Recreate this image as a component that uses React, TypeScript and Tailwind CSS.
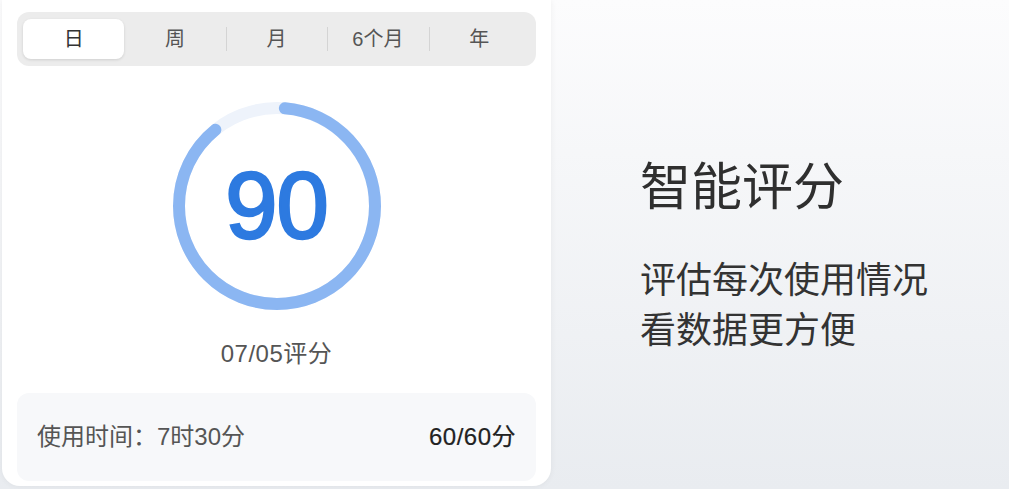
const tabs = ["日", "周", "月", "6个月", "年"];

function ScoreRing({ score }: { score: number }) {
  const r = 98;
  const c = 2 * Math.PI * r;
  const len = c * (score / 100) - 14;
  return (
    <div className="relative w-[220px] h-[220px]">
      <svg width="220" height="220" viewBox="0 0 220 220" className="absolute inset-0 -rotate-90">
        <circle cx="110" cy="110" r={r} fill="none" stroke="#eef3fb" strokeWidth="12" />
        <circle
          cx="110"
          cy="110"
          r={r}
          fill="none"
          stroke="#8bb6f2"
          strokeWidth="12"
          strokeLinecap="round"
          strokeDasharray={`${len} ${c}`}
          strokeDashoffset={-8}
        />
      </svg>
      <div className="absolute inset-0 flex items-center justify-center">
        <span className="text-[94px] leading-none text-[#2d7ae0] tracking-[-1px] [-webkit-text-stroke:2.5px_#2d7ae0]">
          {score}
        </span>
      </div>
    </div>
  );
}

export default function App() {
  return (
    <div
      className="w-[1009px] h-[489px] flex bg-gradient-to-b from-[#fcfcfd] to-[#e9ecf0] overflow-hidden"
      style={{ fontFamily: '"Liberation Sans", "Noto Sans CJK SC", sans-serif' }}
    >
      {/* score card */}
      <div className="ml-[2px] w-[549px] h-[486px] bg-white rounded-b-[18px] shadow-[0_0_6px_rgba(0,0,0,0.06)] flex flex-col px-[15px] pt-[12px]">
        <div className="h-[54px] rounded-[12px] bg-[#ececec] flex items-center px-[6px]">
          {tabs.map((t, i) => (
            <div key={t} className="flex-1 h-[40px] flex items-center relative">
              {i > 1 && <div className="absolute left-0 top-[8px] h-[24px] w-px bg-[#d4d4d4]" />}
              <div
                className={
                  i === 0
                    ? "w-full h-full rounded-[8px] bg-white shadow-[0_1px_3px_rgba(0,0,0,0.12)] flex items-center justify-center text-[20px] text-[#333]"
                    : "w-full h-full flex items-center justify-center text-[20px] text-[#555]"
                }
              >
                {t}
              </div>
            </div>
          ))}
        </div>

        <div className="flex flex-col items-center mt-[30px]">
          <ScoreRing score={90} />
          <div className="mt-[24px] text-[24px] leading-[28px] tracking-[0.5px] text-[#555]">07/05评分</div>
        </div>

        <div className="mt-[25px] h-[88px] rounded-[12px] bg-[#f7f8fa] flex items-center justify-between px-[20px]">
          <span className="text-[24px] text-[#555]">使用时间：7时30分</span>
          <span className="text-[24px] text-[#222] tracking-[0.5px] [-webkit-text-stroke:0.2px_#222]">60/60分</span>
        </div>
      </div>

      {/* description */}
      <div className="ml-[89px] pt-[156px] flex flex-col">
        <div className="text-[51px] leading-[64px] text-[#2f2f2f]">智能评分</div>
        <div className="mt-[36px] text-[36px] leading-[50px] text-[#333]">
          <div>评估每次使用情况</div>
          <div>看数据更方便</div>
        </div>
      </div>
    </div>
  );
}
